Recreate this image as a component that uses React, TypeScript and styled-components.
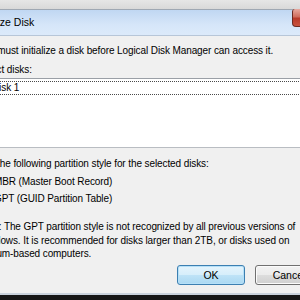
import styled, { createGlobalStyle } from "styled-components";

const GlobalStyle = createGlobalStyle`
  html, body {
    margin: 0;
    padding: 0;
    background: #161616;
  }
  body {
    font-family: "Liberation Sans", Arial, sans-serif;
  }
`;

function App() {
  return (
    <>
      <GlobalStyle />
      <Screen>
        <Window>
          <FrameTop />
          <TitleBar>
            <Title>Initialize Disk</Title>
            <CloseButton />
          </TitleBar>
          <Body>
            <Text>You must initialize a disk before Logical Disk Manager can access it.</Text>
            <Label>Select disks:</Label>
            <ListBox>
              <ListItem>
                <Checkbox $checked />
                <ItemText $focused>Disk 1</ItemText>
              </ListItem>
            </ListBox>
            <Label $gap={9}>Use the following partition style for the selected disks:</Label>
            <RadioRow $gap={4}>
              <Radio $checked />
              <span>MBR (Master Boot Record)</span>
            </RadioRow>
            <RadioRow $gap={3}>
              <Radio />
              <span>GPT (GUID Partition Table)</span>
            </RadioRow>
            <Note>
              Note: The GPT partition style is not recognized by all previous versions of
              <br />
              Windows. It is recommended for disks larger than 2TB, or disks used on
              <br />
              Itanium-based computers.
            </Note>
            <ButtonRow>
              <Button $default>OK</Button>
              <Button>Cancel</Button>
            </ButtonRow>
          </Body>
          <FrameBottom />
        </Window>
      </Screen>
    </>
  );
}

export default App;

const Screen = styled.div`
  width: 300px;
  height: 300px;
  overflow: hidden;
  background: #161616;
`;

const Window = styled.div`
  width: 374px;
  margin-left: -34px;
  display: flex;
  flex-direction: column;
  background: #f0f0f0;
`;

const FrameTop = styled.div`
  height: 9px;
  background: linear-gradient(#e6e6e6, #d9d9d9);
  border-bottom: 1px solid #9fa8b3;
`;

const TitleBar = styled.div`
  height: 25px;
  display: flex;
  align-items: flex-start;
  justify-content: space-between;
  background: linear-gradient(#c0d7f2, #d6e6f9 60%, #dceafa);
  border-bottom: 1px solid #b7c6d8;
`;

const Title = styled.div`
  padding-left: 7px;
  padding-top: 6px;
  font-size: 10.5px;
  line-height: 13px;
  color: #000;
`;

const CloseButton = styled.div`
  width: 43px;
  height: 17px;
  margin-right: 3px;
  margin-top: -1px;
  border: 1px solid #6b2a22;
  border-top: none;
  border-radius: 0 0 4px 4px;
  border-top-left-radius: 3px;
  background: linear-gradient(#e8a99f, #cf6e5f 45%, #b8392a 55%, #c8533f);
`;

const Body = styled.div`
  padding: 8px 12px 8px 12px;
  display: flex;
  flex-direction: column;
  font-size: 10px;
  letter-spacing: -0.1px;
  line-height: 14px;
  color: #000;
`;

const Text = styled.div`
  white-space: nowrap;
`;

const Label = styled.div<{ $gap?: number }>`
  margin-top: ${(p) => p.$gap ?? 5}px;
  margin-left: -1px;
  white-space: nowrap;
`;

const ListBox = styled.div`
  margin-top: 1px;
  height: 66px;
  background: #fff;
  border: 1px solid #9a9fa6;
  border-bottom-color: #b9bdc2;
  padding: 2px 0 0 0;
`;

const ListItem = styled.div`
  display: flex;
  align-items: center;
  gap: 1px;
`;

const Checkbox = styled.span<{ $checked?: boolean }>`
  box-sizing: border-box;
  width: 10px;
  height: 10px;
  border: 1px solid #8e8f8f;
  background: ${(p) => (p.$checked ? "#dfe9f5" : "#f4f4f4")};
`;

const ItemText = styled.div<{ $focused?: boolean }>`
  flex: 1;
  height: 12px;
  line-height: 12px;
  padding-left: 1px;
  border: 1px dotted ${(p) => (p.$focused ? "#4a4a4a" : "transparent")};
  white-space: nowrap;
`;

const RadioRow = styled.div<{ $gap: number }>`
  margin-top: ${(p) => p.$gap}px;
  display: flex;
  align-items: center;
  gap: 5px;
  white-space: nowrap;
  margin-left: -2px;
`;

const Radio = styled.span<{ $checked?: boolean }>`
  width: 11px;
  height: 11px;
  border-radius: 50%;
  border: 1px solid #8e8f8f;
  background: ${(p) =>
    p.$checked
      ? "radial-gradient(circle, #1d5a9e 0 3px, #e8eef5 3.5px)"
      : "#eef1f4"};
`;

const Note = styled.div`
  margin-top: 14px;
  line-height: 13.5px;
  white-space: nowrap;
`;

const ButtonRow = styled.div`
  margin-top: 4px;
  display: flex;
  justify-content: flex-end;
  gap: 10px;
  padding-right: 5px;
`;

const Button = styled.button<{ $default?: boolean }>`
  width: 68px;
  height: 20px;
  padding: 0;
  font-family: "Liberation Sans", Arial, sans-serif;
  font-size: 10.5px;
  color: #000;
  border-radius: 3px;
  border: 1px solid ${(p) => (p.$default ? "#3c7fb1" : "#707070")};
  box-shadow: inset 0 0 0 1px ${(p) => (p.$default ? "#b5e0f8" : "#fbfbfb")};
  background: ${(p) =>
    p.$default
      ? "linear-gradient(#e5f4fc, #d6eefb 50%, #bfe3f7 50%, #aad8f2)"
      : "linear-gradient(#f2f2f2, #ebebeb 50%, #dddddd 50%, #cfcfcf)"};
`;

const FrameBottom = styled.div`
  height: 2px;
  background: #c9d2dc;
`;
